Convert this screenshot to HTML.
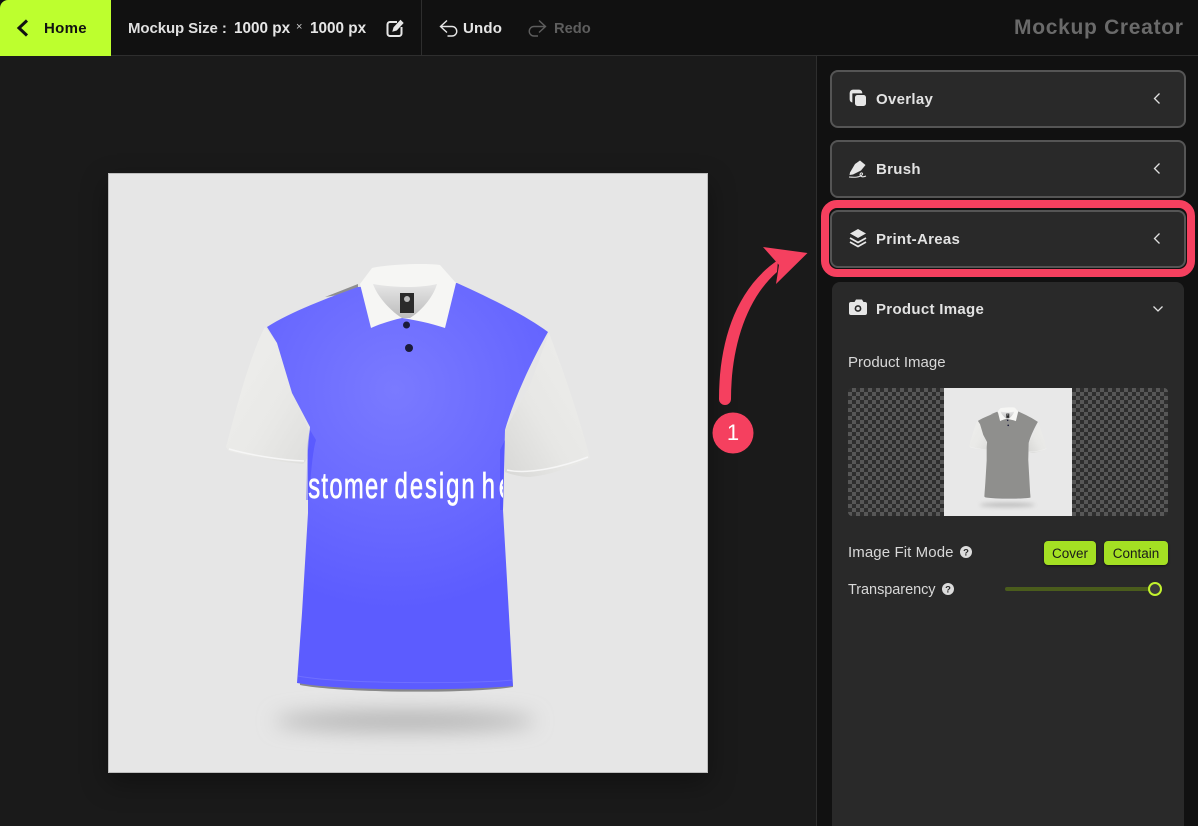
<!DOCTYPE html>
<html><head><meta charset="utf-8"><style>
*{box-sizing:border-box}
html,body{margin:0;padding:0;width:1198px;height:826px;overflow:hidden;background:#1a1a1a;font-family:"Liberation Sans","Noto Sans CJK SC",sans-serif;color:#e6e6e6}
.a{position:absolute}
.top{left:0;top:0;width:1198px;height:56px;background:#111;border-bottom:1px solid #2e2e2e}
.t{position:absolute;white-space:nowrap;font-weight:700;line-height:20px}
.h{font-size:15px;letter-spacing:.3px;color:#e2e2e2}
.r{font-size:15px;font-weight:400;color:#d8d8d8}
.side{left:816px;top:56px;width:382px;height:770px;background:#111;border-left:1px solid #2e2e2e}
.btn{position:absolute;left:830px;width:356px;height:58px;background:#292929;border:2px solid #555;border-radius:8px}
.green{position:absolute;top:541px;height:24px;background:#a4e023;border-radius:4px;color:#1a1a1a;font-size:13.5px;line-height:25px;text-align:center;box-shadow:0 1px 2px rgba(0,0,0,.5)}
.check{left:848px;top:388px;width:320px;height:128px;border-radius:4px;background-color:#2e2e2e;background-image:conic-gradient(#575757 25%,#2e2e2e 0 50%,#575757 0 75%,#2e2e2e 0);background-size:8px 8px}
</style></head><body>
<div class="a top"></div>
<div class="a" style="left:0;top:0;width:111px;height:56px;background:#bdff2e;border-top-left-radius:8px"></div>
<svg class="a" style="left:0;top:0" width="600" height="56" fill="none">
<path d="M27 20.500L19 28L27 35.500" stroke="#111" stroke-width="3"/>
<g stroke="#e6e6e6">
<path d="M397 22h-7a2.500 2.500 0 0 0-2.500 2.500v9a2.500 2.500 0 0 0 2.500 2.500h9a2.500 2.500 0 0 0 2.500-2.500v-6.500" stroke-width="2"/>
<path d="M393 31l1-3.500 6.500-7 2.500 2.500-6.500 7z" fill="#e6e6e6" stroke-width="1"/>
</g>
<path d="M447 20.500L440.500 26.500L447 32.500M441 26.500H452a4.700 4.700 0 0 1 0 9.500h-4.500" stroke="#e6e6e6" stroke-width="1.400"/>
<path d="M539 20.500L545.500 26.500L539 32.500M545 26.500H534a4.700 4.700 0 0 0 0 9.500h4" stroke="#5e5e5e" stroke-width="1.400"/>
<path d="M421.500 0V56" stroke="#2e2e2e"/>
</svg>
<div class="t" style="left:44px;top:19px;font-size:15px;color:#111;letter-spacing:.3px">Home</div>
<div class="t" style="left:128px;top:19px;font-size:15px;color:#e0e0e0;letter-spacing:-.1px">Mockup Size :</div>
<div class="t" style="left:234px;top:19px;font-size:15.300px;color:#e6e6e6">1000 px</div>
<div class="t" style="left:296px;top:17px;font-size:11px;color:#ccc;font-weight:400">×</div>
<div class="t" style="left:310px;top:19px;font-size:15.300px;color:#e6e6e6">1000 px</div>
<div class="t" style="left:463px;top:19px;font-size:15px;color:#e6e6e6;letter-spacing:.2px">Undo</div>
<div class="t" style="left:554px;top:19px;font-size:14.700px;color:#5e5e5e">Redo</div>
<div class="t" style="left:1014px;top:17px;font-size:21px;line-height:22px;color:#6a6a6a;letter-spacing:.7px">Mockup Creator</div>

<div class="a side"></div>
<div class="a" style="left:108px;top:173px;width:600px;height:600px;background:#e6e6e6;border:1px solid #bdbdbd;box-shadow:0 10px 25px rgba(0,0,0,.35)"></div>

<svg class="a" style="left:108px;top:173px" width="600" height="600" viewBox="108 173 600 600">
<defs>
<radialGradient id="bl" cx="395" cy="390" r="220" gradientUnits="userSpaceOnUse"><stop offset="0" stop-color="#7a7aff"/><stop offset=".55" stop-color="#6a6aff"/><stop offset="1" stop-color="#5c5cff"/></radialGradient>
<linearGradient id="sl" x1="0" y1="0" x2="1" y2="1"><stop offset="0" stop-color="#efefed"/><stop offset=".6" stop-color="#e9e9e7"/><stop offset="1" stop-color="#dededc"/></linearGradient>
<linearGradient id="sr" x1="1" y1="0" x2="0" y2="1"><stop offset="0" stop-color="#eeeeec"/><stop offset=".6" stop-color="#e7e7e5"/><stop offset="1" stop-color="#d8d8d6"/></linearGradient>
<linearGradient id="nk" x1="0" y1="0" x2="0" y2="1"><stop offset="0" stop-color="#e6e6e6"/><stop offset="1" stop-color="#bcbcbc"/></linearGradient>
<filter id="b6" x="-30%" y="-150%" width="160%" height="400%"><feGaussianBlur stdDeviation="10"/></filter>
<clipPath id="tc"><path d="M308 460H503V510H308z"/></clipPath>
<g id="shirt">
<path d="M265 327C258 340 252 357 244 382C237 405 231 428 226 447L229 451C250 457 280 462 303 464C308 460 310 450 310 433L292 393L277 343Z" fill="url(#sl)"/>
<path d="M229 449C250 455 280 460 304 461" fill="none" stroke="#f6f6f6" stroke-width="1.500"/>
<path d="M549 333C565 375 580 420 590 458C570 468 550 475 530 477C520 477 510 474 505 472L505 430L530 385Z" fill="url(#sr)"/>
<path d="M507 470C530 475 565 466 588 457" fill="none" stroke="#f6f6f6" stroke-width="1.500"/>
<path d="M300 685C340 693 470 694 513 687L510 655L300 655Z" fill="#888"/>
<path d="M325 297L358 284L358 292Z" fill="#8f8f8f"/>
<path d="M267 327C290 312 330 297 358 287L457 283C490 298 525 315 548 332C535 355 515 395 505 430L503 510L507 580L513 686C470 690 350 692 297 683L302 613L308 513L308 450L310 427L292 393L277 343Z"/>
<path d="M372 268C390 264 425 263 440 265L456 283L445 328C430 323 415 320 402 318C392 320 380 324 371 328L360 284Z" fill="#f6f6f4"/>
<path d="M373 284C395 288 420 288 437 284C433 298 420 312 410 318L402 318C392 312 378 298 373 284Z" fill="url(#nk)"/>
<rect x="400" y="293" width="14" height="20" fill="#2a2a2a"/>
<circle cx="407" cy="299" r="3" fill="#bbb"/>
<circle cx="406.500" cy="325" r="3.500" fill="#1b1b3a"/>
<circle cx="409" cy="348" r="4" fill="#1b1b3a"/>
</g>
</defs>
<ellipse cx="405" cy="721" rx="130" ry="10" fill="#b2b2b2" filter="url(#b6)"/>
<use href="#shirt" fill="url(#bl)"/>
<path d="M310 430C306 445 308 460 306 500L309 500C311 470 313 450 316 440Z" fill="#4040ff" opacity=".4"/>
<path d="M505 440L503 510L500 510L500 450Z" fill="#4040ff" opacity=".4"/>
<path d="M298 676C340 684 470 684 513 680" fill="none" stroke="#7c7cff" stroke-width="1" opacity=".6"/>
<g clip-path="url(#tc)">
<g transform="scale(.66 1)" font-family="Liberation Sans" font-size="36" fill="#fff" stroke="#fff" stroke-width=".7">
<text x="467" y="498" textLength="120">stomer</text>
<text x="598" y="498" textLength="121">design</text>
<text x="730" y="498" textLength="46">he</text>
</g>
</g>
</svg>

<div class="a btn" style="top:70px"></div>
<div class="a btn" style="top:140px"></div>
<div class="a btn" style="top:210px"></div>
<div class="a" style="left:832px;top:282px;width:352px;height:544px;background:#292929;border-radius:8px 8px 0 0"></div>
<div class="a" style="left:821px;top:200px;width:374px;height:77px;border:8px solid #f5405f;border-radius:16px"></div>

<svg class="a" style="left:700px;top:60px" width="498" height="400" fill="none">
<path d="M19 339C19 285 34 230 78 200L77 212C45 240 31 290 31 339A6 6 0 0 1 19 339Z" fill="#f5405f"/>
<path d="M63 187L107.500 193L76 224L79 205Z" fill="#f5405f"/>
<circle cx="33" cy="373" r="20.500" fill="#f5405f"/>
</svg>
<div class="a" style="left:713px;top:422px;width:40px;text-align:center;font-size:22px;line-height:22px;color:#fff">1</div>

<svg class="a" style="left:840px;top:85px" width="350" height="240">
<g fill="#e6e6e6">
<rect x="15" y="10" width="11" height="11" rx="2.500"/>
<path d="M13 5h6a3 3 0 0 1 3 3h-9a1 1 0 0 0-.5 0a1 1 0 0 0-.5 1v8a3 3 0 0 1-2-3V8a3 3 0 0 1 3-3z" stroke="#e6e6e6" stroke-width=".7"/>
<path d="M10 87.500L15 79L20 75.500L25.500 80L21 85.500L13 89.500L9.500 90Z"/>
<path d="M9 92C15 92.500 19 92.500 22 90C23.500 88.500 21.500 87 20.500 88.500C19 90.500 21.500 93 26 91" fill="none" stroke="#e6e6e6" stroke-width="1.100"/>
<path d="M18 144L26 148.500L18 153L10 148.500Z"/>
<path d="M10 153L18 157.500L26 153" fill="none" stroke="#e6e6e6" stroke-width="1.800"/>
<path d="M10 157L18 161.500L26 157" fill="none" stroke="#e6e6e6" stroke-width="1.800"/>
<path d="M11 217h3.500l1.500-2.500h6l1.500 2.500H25a2 2 0 0 1 2 2v9a2 2 0 0 1-2 2H11a2 2 0 0 1-2-2v-9a2 2 0 0 1 2-2z"/>
</g>
<circle cx="18" cy="223.500" r="3.400" fill="#292929"/>
<circle cx="18" cy="223.500" r="1.800" fill="#e6e6e6"/>
<g fill="none" stroke="#e0e0e0" stroke-width="1.300">
<path d="M319.500 8.500L314.500 13.500L319.500 18.500"/>
<path d="M319.500 78.500L314.500 83.500L319.500 88.500"/>
<path d="M319.500 148.500L314.500 153.500L319.500 158.500"/>
<path d="M313.500 221.500L318 226L322.500 221.500"/>
</g>
</svg>
<div class="t h" style="left:876px;top:90px">Overlay</div>
<div class="t h" style="left:876px;top:160px">Brush</div>
<div class="t h" style="left:876px;top:230px">Print-Areas</div>
<div class="t h" style="left:876px;top:300px">Product Image</div>

<div class="t r" style="left:848px;top:353px">Product Image</div>
<div class="a check"></div>
<div class="a" style="left:944px;top:388px;width:128px;height:128px;background:#e8e8e8"></div>
<svg class="a" style="left:944px;top:388px" width="128" height="128" viewBox="108 173 600 600">
<ellipse cx="405" cy="721" rx="130" ry="10" fill="#bbb" filter="url(#b6)"/>
<use href="#shirt" fill="#8f8f8d"/>
</svg>

<div class="t r" style="left:848px;top:543px;letter-spacing:.1px">Image Fit Mode</div>
<div class="t r" style="left:848px;top:580px;font-size:14.500px;letter-spacing:-.05px">Transparency</div>
<svg class="a" style="left:950px;top:540px" width="220" height="60">
<circle cx="16" cy="12" r="6" fill="#dcdcdc"/>
<text x="16" y="15.500" font-size="9.500" font-weight="700" text-anchor="middle" font-family="Liberation Sans" fill="#292929">?</text>
<rect x="55" y="47" width="150" height="4" rx="2" fill="#4a5c1c"/>
<circle cx="205" cy="49" r="6" fill="#3a3a3a" stroke="#c2f22e" stroke-width="2"/>
</svg>
<svg class="a" style="left:940px;top:580px" width="20" height="20">
<circle cx="8" cy="9" r="6" fill="#dcdcdc"/>
<text x="8" y="12.500" font-size="9.500" font-weight="700" text-anchor="middle" font-family="Liberation Sans" fill="#292929">?</text>
</svg>
<div class="green" style="left:1044px;width:52px">Cover</div>
<div class="green" style="left:1104px;width:64px">Contain</div>
</body></html>
